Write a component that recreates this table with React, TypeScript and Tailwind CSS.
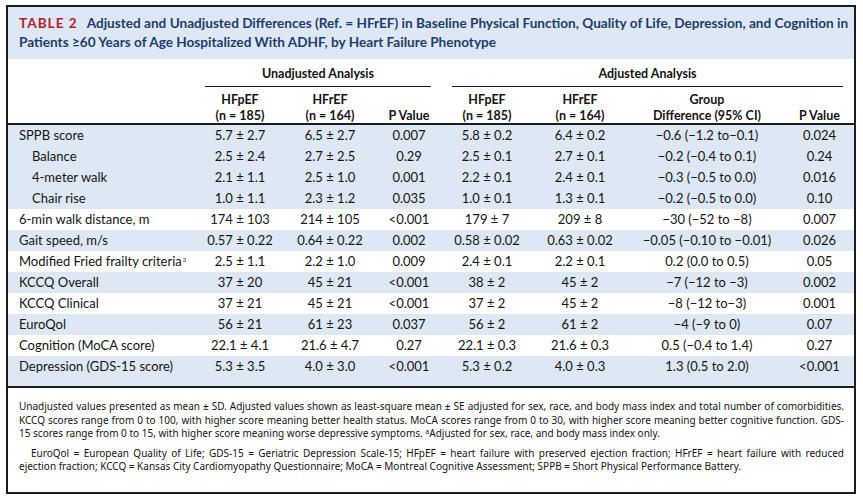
import React from 'react';

type Row = {
  label: string;
  sup?: boolean;
  indent?: boolean;
  blue: boolean;
  cells: string[];
};

const rows: Row[] = [
  { label: 'SPPB score', blue: true, cells: ['5.7 ± 2.7', '6.5 ± 2.7', '0.007', '5.8 ± 0.2', '6.4 ± 0.2', '−0.6 (−1.2 to−0.1)', '0.024'] },
  { label: 'Balance', indent: true, blue: true, cells: ['2.5 ± 2.4', '2.7 ± 2.5', '0.29', '2.5 ± 0.1', '2.7 ± 0.1', '−0.2 (−0.4 to 0.1)', '0.24'] },
  { label: '4-meter walk', indent: true, blue: true, cells: ['2.1 ± 1.1', '2.5 ± 1.0', '0.001', '2.2 ± 0.1', '2.4 ± 0.1', '−0.3 (−0.5 to 0.0)', '0.016'] },
  { label: 'Chair rise', indent: true, blue: true, cells: ['1.0 ± 1.1', '2.3 ± 1.2', '0.035', '1.0 ± 0.1', '1.3 ± 0.1', '−0.2 (−0.5 to 0.0)', '0.10'] },
  { label: '6-min walk distance, m', blue: false, cells: ['174 ± 103', '214 ± 105', '<0.001', '179 ± 7', '209 ± 8', '−30 (−52 to −8)', '0.007'] },
  { label: 'Gait speed, m/s', blue: true, cells: ['0.57 ± 0.22', '0.64 ± 0.22', '0.002', '0.58 ± 0.02', '0.63 ± 0.02', '−0.05 (−0.10 to −0.01)', '0.026'] },
  { label: 'Modified Fried frailty criteria', sup: true, blue: false, cells: ['2.5 ± 1.1', '2.2 ± 1.0', '0.009', '2.4 ± 0.1', '2.2 ± 0.1', '0.2 (0.0 to 0.5)', '0.05'] },
  { label: 'KCCQ Overall', blue: true, cells: ['37 ± 20', '45 ± 21', '<0.001', '38 ± 2', '45 ± 2', '−7 (−12 to −3)', '0.002'] },
  { label: 'KCCQ Clinical', blue: false, cells: ['37 ± 21', '45 ± 21', '<0.001', '37 ± 2', '45 ± 2', '−8 (−12 to−3)', '0.001'] },
  { label: 'EuroQol', blue: true, cells: ['56 ± 21', '61 ± 23', '0.037', '56 ± 2', '61 ± 2', '−4 (−9 to 0)', '0.07'] },
  { label: 'Cognition (MoCA score)', blue: false, cells: ['22.1 ± 4.1', '21.6 ± 4.7', '0.27', '22.1 ± 0.3', '21.6 ± 0.3', '0.5 (−0.4 to 1.4)', '0.27'] },
  { label: 'Depression (GDS-15 score)', blue: true, cells: ['5.3 ± 3.5', '4.0 ± 3.0', '<0.001', '5.3 ± 0.2', '4.0 ± 0.3', '1.3 (0.5 to 2.0)', '<0.001'] },
];

const cols = 'grid grid-cols-[187px_90px_90px_68px_88px_98px_156px_69px]';

export default function App() {
  return (
    <div className="w-[863px] h-[501px] bg-white pl-[6px] pt-[5px] font-['Lato',sans-serif] text-[#141414]">
      <div className="w-[850px] h-[489px] border-2 border-[#1c1c1c] flex flex-col">
        {/* title band */}
        <div className="bg-[#dde8f4] h-[52px] pl-[11px] pr-2 pt-[7px] text-[13.6px] leading-[19px] font-bold text-[#1d3c6e] whitespace-nowrap">
          <div>
            <span className="text-[#b3212e] tracking-[1px] mr-[9px]">TABLE 2</span>
            Adjusted and Unadjusted Differences (Ref. = HFrEF) in Baseline Physical Function, Quality of Life, Depression, and Cognition in
          </div>
          <div>Patients ≥60 Years of Age Hospitalized With ADHF, by Heart Failure Phenotype</div>
        </div>

        {/* column headers */}
        <div className={`${cols} h-[66px] pt-[7px] text-[12.5px] font-bold leading-[16px] border-b-2 border-[#1c1c1c]`}>
          <div />
          <div className="col-span-3 ml-[10px] mr-[12px] text-center border-b-[1.5px] border-[#1c1c1c] h-[21px]">
            Unadjusted Analysis
          </div>
          <div className="col-span-4 ml-[9px] mr-[11px] text-center border-b-[1.5px] border-[#1c1c1c] h-[21px]">
            Adjusted Analysis
          </div>
          <div />
          <div className="text-center pt-[5px]">HFpEF<br />(n = 185)</div>
          <div className="text-center pt-[5px]">HFrEF<br />(n = 164)</div>
          <div className="text-center pt-[21px]">P Value</div>
          <div className="text-center pt-[5px]">HFpEF<br />(n = 185)</div>
          <div className="text-center pt-[5px]">HFrEF<br />(n = 164)</div>
          <div className="text-center pt-[5px]">Group<br />Difference (95% CI)</div>
          <div className="text-center pt-[21px]">P Value</div>
        </div>

        {/* body */}
        <div className="text-[13px] border-b-2 border-[#1c1c1c]">
          {rows.map((r, i) => (
            <div
              key={i}
              className={`${cols} h-[21px] items-center ${r.blue ? 'bg-[#dde8f4]' : 'bg-white'}`}
            >
              <div className={`whitespace-nowrap ${r.indent ? 'pl-[24px]' : 'pl-[11px]'}`}>
                {r.label}
                {r.sup && <sup className="text-[7px] text-[#b3212e] ml-[1px]">a</sup>}
              </div>
              {r.cells.map((c, j) => (
                <div key={j} className="text-center whitespace-nowrap">{c}</div>
              ))}
            </div>
          ))}
          <div className="h-[9px] bg-[#dde8f4]" />
        </div>

        {/* footnotes */}
        <div className="pl-[11px] pr-[10px] pt-[12px] text-[10px] leading-[13.5px] font-['Noto_Sans',sans-serif]">
          <div className="[text-align-last:justify]">
            Unadjusted values presented as mean ± SD. Adjusted values shown as least-square mean ± SE adjusted for sex, race, and body mass index and total number of comorbidities.
          </div>
          <div className="[text-align-last:justify]">
            KCCQ scores range from 0 to 100, with higher score meaning better health status. MoCA scores range from 0 to 30, with higher score meaning better cognitive function. GDS-
          </div>
          <div>
            15 scores range from 0 to 15, with higher score meaning worse depressive symptoms. <sup className="text-[7px]">a</sup>Adjusted for sex, race, and body mass index only.
          </div>
          <div className="mt-[6px] pl-[12px] [text-align-last:justify]">
            EuroQol = European Quality of Life; GDS-15 = Geriatric Depression Scale-15; HFpEF = heart failure with preserved ejection fraction; HFrEF = heart failure with reduced
          </div>
          <div>
            ejection fraction; KCCQ = Kansas City Cardiomyopathy Questionnaire; MoCA = Montreal Cognitive Assessment; SPPB = Short Physical Performance Battery.
          </div>
        </div>
      </div>
    </div>
  );
}
